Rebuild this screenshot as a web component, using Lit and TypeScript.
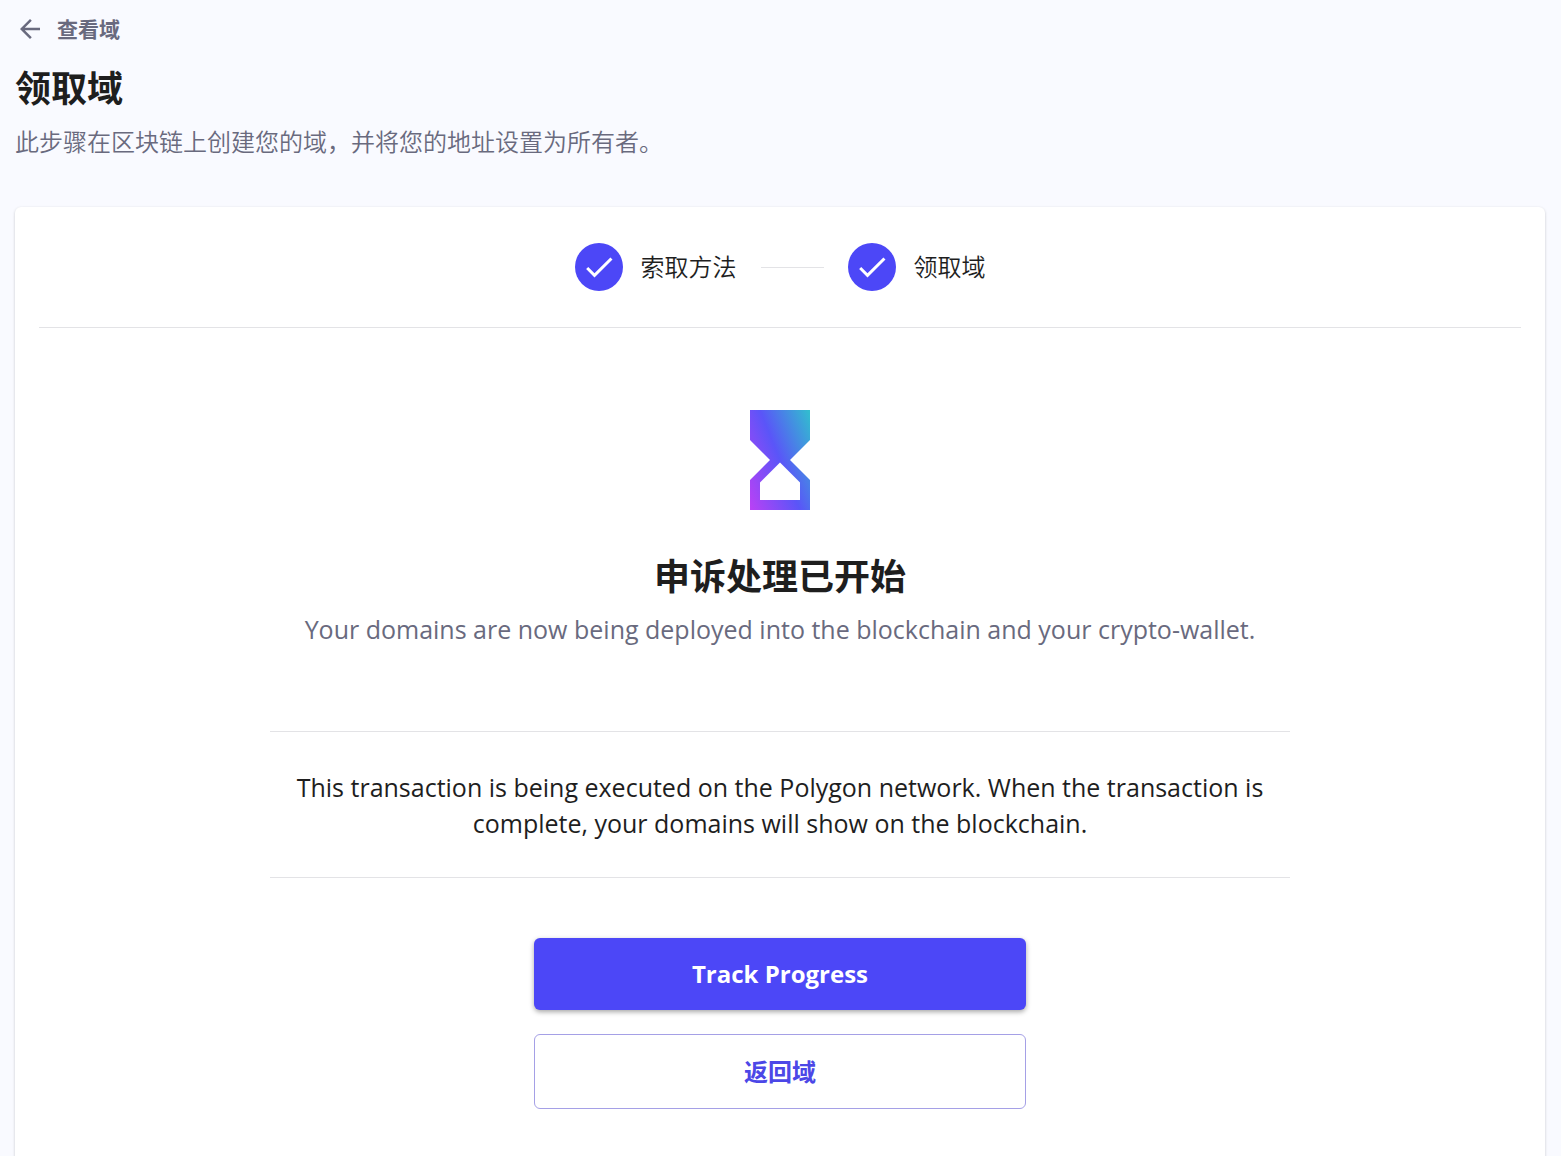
import { LitElement, html, css } from "lit";
import { customElement } from "lit/decorators.js";

const check = html`<svg class="check" viewBox="0 0 24 24" aria-hidden="true">
  <path d="M9 16.17 4.83 12l-1.42 1.41L9 19 21 7l-1.41-1.41z" fill="#fff"></path>
</svg>`;

@customElement("app-root")
export class AppRoot extends LitElement {
  static styles = css`
    :host {
      display: block;
      min-height: 100vh;
      box-sizing: border-box;
      padding: 11px 16px 0 15px;
      background: #f9faff;
      color: #1e1e1e;
      font-family: "Open Sans", "Noto Sans CJK SC", sans-serif;
      font-size: 24px;
      line-height: 36px;
    }
    *, *::before { box-sizing: border-box; }
    h1, h2, p, ol { margin: 0; padding: 0; }
    a { text-decoration: none; }
    .back {
      display: flex;
      width: fit-content;
      align-items: center;
      gap: 12px;
      height: 36px;
      color: #696a7e;
      font-size: 21px;
      font-weight: 700;
    }
    .back svg { width: 30px; height: 30px; }
    .title { margin-top: 18px; font-size: 36px; line-height: 48px; font-weight: 700; }
    .lead { margin-top: 11px; color: #696a7e; font-weight: 350; }
    .card {
      margin-top: 47px;
      padding: 0 24px 72px;
      background: #fff;
      border-radius: 6px;
      box-shadow: 0 1px 3px rgba(0, 0, 0, 0.2);
    }
    .steps {
      display: flex;
      justify-content: center;
      align-items: center;
      gap: 24px;
      height: 121px;
      list-style: none;
      border-bottom: 1px solid #e3e3e6;
    }
    .step { display: flex; align-items: center; gap: 18px; font-weight: 350; }
    .dot {
      display: grid;
      place-items: center;
      width: 48px;
      height: 48px;
      border-radius: 50%;
      background: #4c47f7;
    }
    .check { width: 36px; height: 36px; }
    .link { width: 63px; height: 1px; background: #e3e3e6; }
    .body {
      display: flex;
      flex-direction: column;
      align-items: center;
      max-width: 1020px;
      margin: 0 auto;
      padding-top: 82px;
      text-align: center;
    }
    .glass { display: block; width: 60px; height: 100px; }
    .heading { margin-top: 43px; font-size: 36px; line-height: 48px; font-weight: 700; }
    .sub { margin-top: 10px; color: #696a7e; font-size: 25px; }
    .note {
      width: 100%;
      margin-top: 84px;
      padding: 37px 24px 36px;
      border: solid #e3e3e6;
      border-width: 1px 0;
      font-size: 25px;
    }
    .actions {
      display: flex;
      flex-direction: column;
      gap: 24px;
      width: 100%;
      max-width: 492px;
      margin-top: 60px;
    }
    .btn {
      width: 100%;
      padding: 18px;
      border: 0;
      border-radius: 6px;
      font: inherit;
      font-weight: 700;
      cursor: pointer;
    }
    .primary { background: #4c47f7; color: #fff; box-shadow: 0 2px 5px rgba(0, 0, 0, 0.35); }
    .outline { padding-top: 19px; border: 1px solid #a5a0e6; background: #fff; color: #4c47e7; }
  `;

  render() {
    return html`
      <header>
        <a class="back" href="#domains">
          <svg viewBox="0 0 24 24" aria-hidden="true">
            <path fill="currentColor" d="M20 11H7.83l5.59-5.59L12 4l-8 8 8 8 1.41-1.41L7.83 13H20v-2z"></path>
          </svg>
          <span>查看域</span>
        </a>
        <h1 class="title">领取域</h1>
        <p class="lead">此步骤在区块链上创建您的域，并将您的地址设置为所有者。</p>
      </header>
      <main class="card">
        <ol class="steps">
          <li class="step"><span class="dot">${check}</span><span>索取方法</span></li>
          <li class="link" aria-hidden="true"></li>
          <li class="step"><span class="dot">${check}</span><span>领取域</span></li>
        </ol>
        <section class="body">
          <svg class="glass" viewBox="0 0 60 100" aria-hidden="true">
            <defs>
              <linearGradient id="glow" gradientUnits="userSpaceOnUse" x1="-15" y1="68" x2="75" y2="32">
                <stop offset="0" stop-color="#bf40f5"></stop>
                <stop offset="0.5" stop-color="#5a55f8"></stop>
                <stop offset="1" stop-color="#2fc4cc"></stop>
              </linearGradient>
            </defs>
            <path fill="url(#glow)" fill-rule="evenodd" d="M0 0H60V30L40 50L60 70V100H0V70L20 50L0 30ZM30 52.500L10 72.500V90H50V72.500Z"></path>
          </svg>
          <h2 class="heading">申诉处理已开始</h2>
          <p class="sub">Your domains are now being deployed into the blockchain and your crypto-wallet.</p>
          <p class="note">
            This transaction is being executed on the Polygon network. When the transaction is complete, your domains
            will show on the blockchain.
          </p>
          <div class="actions">
            <button class="btn primary" type="button">Track Progress</button>
            <button class="btn outline" type="button">返回域</button>
          </div>
        </section>
      </main>
    `;
  }
}
